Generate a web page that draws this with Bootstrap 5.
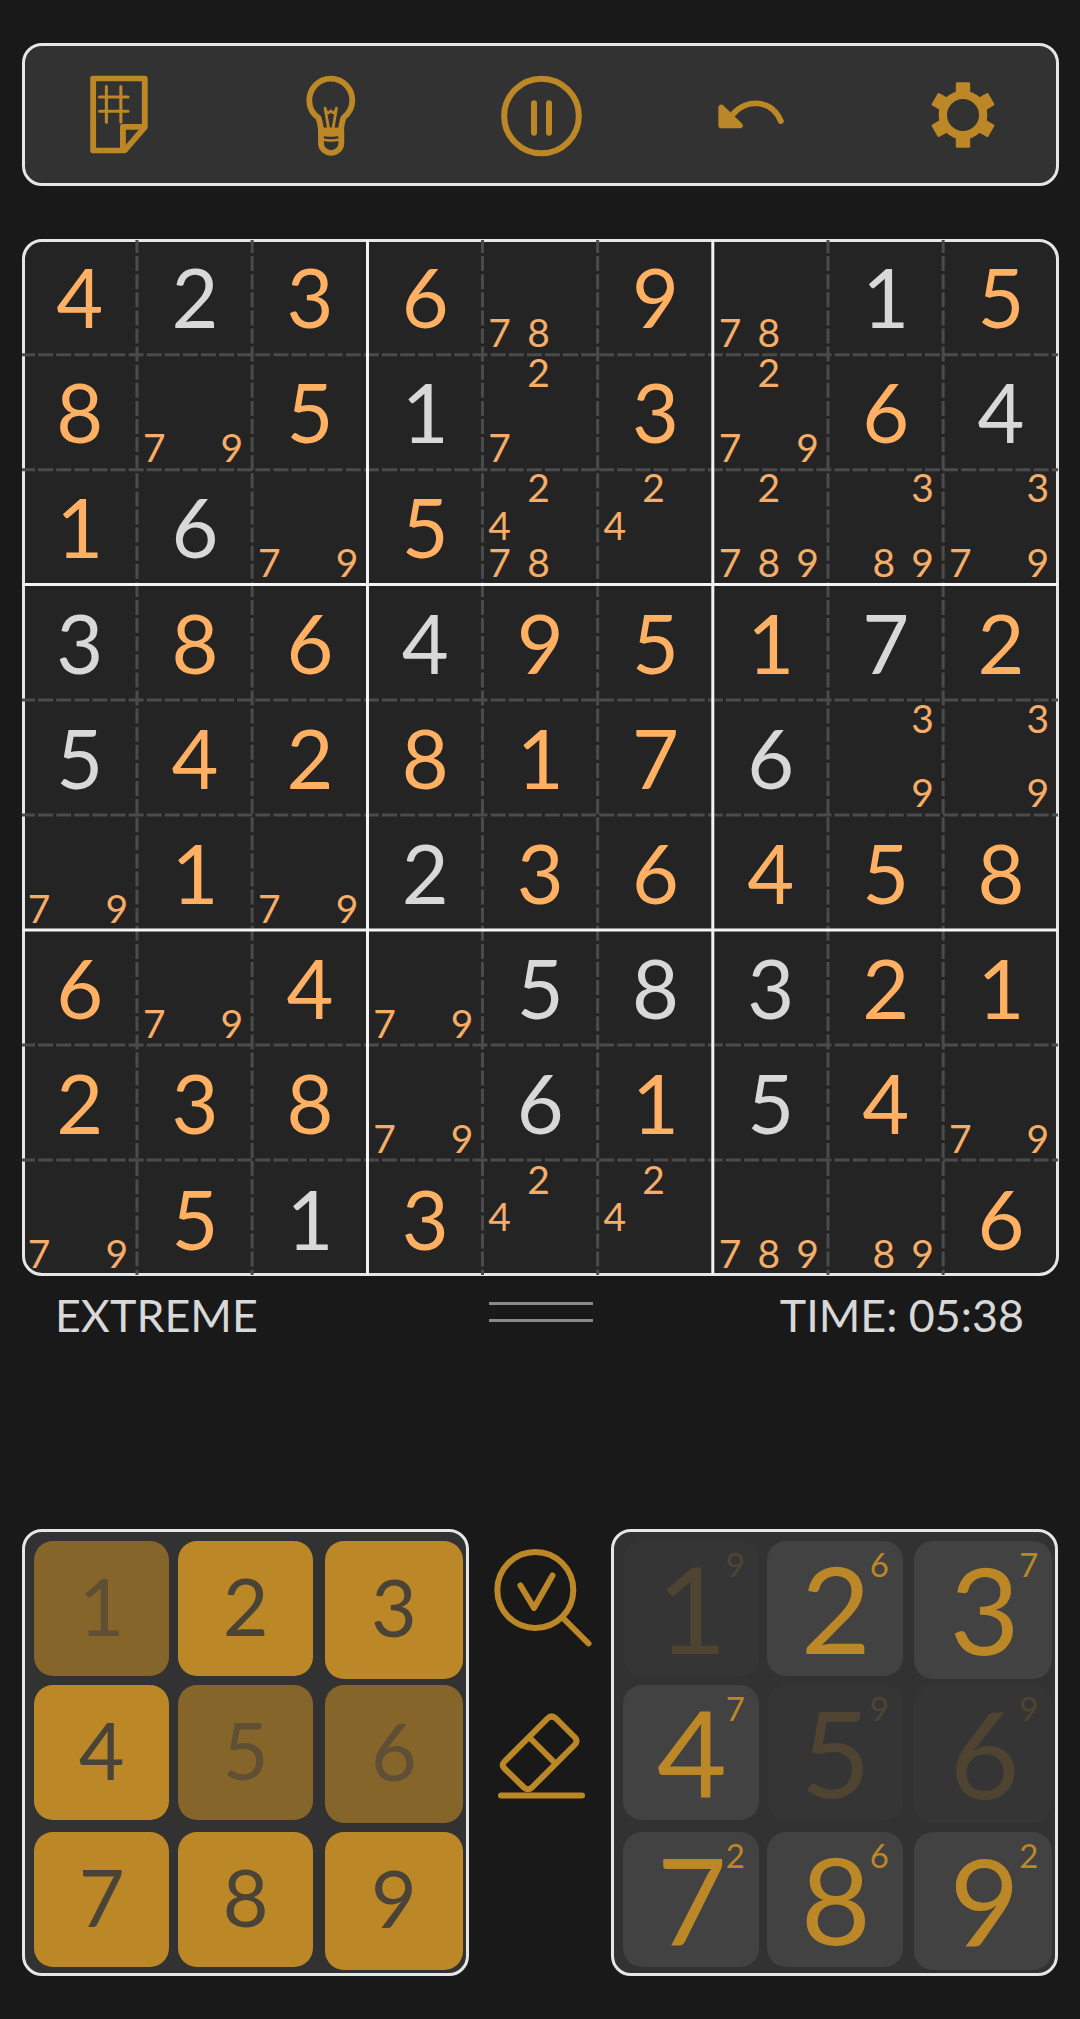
<!DOCTYPE html>
<html lang="en">
<head>
<meta charset="utf-8">
<meta name="viewport" content="width=device-width, initial-scale=1">
<title>Sudoku</title>
<link rel="stylesheet" href="https://cdn.jsdelivr.net/npm/bootstrap@5.3.0/dist/css/bootstrap.min.css">
<style>
  :root { --gold: #bc8726; --panel: #323232; --frame: #e6e6e6; }
  body { background: #191919; font-family: Lato, "Open Sans", sans-serif; height: 2019px; overflow: hidden; }
  .game { width: 1080px; padding: 43px 21px 0 22px; }
  .frame { border: 3px solid var(--frame); border-radius: 20px; background: var(--panel); }
  .toolbar { height: 143px; padding: 0 48px 0 49px; margin-bottom: 53px; }
  .tool { width: 90px; height: 90px; border: 0; padding: 0; background: none; }
  .tool svg { width: 90px; height: 90px; }
  svg { display: block; }
  .ico { fill: none; stroke: var(--gold); stroke-linecap: round; stroke-linejoin: round; }
  .ico .solid { fill: var(--gold); }

  .board { position: relative; height: 1037px; background: #242424; }
  .board-lines { position: absolute; left: -3px; top: -3px; width: 1037px; height: 1037px; pointer-events: none; }
  .cells { display: grid; grid-template-columns: repeat(9, 115.150px); grid-template-rows: repeat(9, 115.200px); margin: -1px 0 0 -2.800px; }
  .cell { font-size: 81px; line-height: 112px; text-align: center; color: #ffb063; }
  .cell.given { color: #d8d8d8; }
  .notes { display: grid; grid-template-columns: repeat(3, 38.800px); grid-template-rows: repeat(3, 37.300px); margin: -2px 0 0 -2.500px; font-size: 39px; line-height: 37.300px; color: #f5ad68; }

  .status { height: 253px; padding: 23px 35px 0 33px; color: #d8d8d8; font-size: 44.800px; line-height: 32px; }
  .status .side-text { flex: 1 1 0; }
  .grip { width: 104px; height: 20px; margin: 3px -1px 0 1px; border-top: 3px solid #888; border-bottom: 3px solid #888; }

  .pad { width: 447px; height: 447px; padding: 9px 0 0 8.500px; display: grid; grid-template-columns: 144px 147px 139px; grid-template-rows: 144px 147px 139px; }
  .key { position: relative; width: 135.500px; height: 135px; border: 0; border-radius: 19px; padding: 0 0 0 1px; background: var(--gold); color: #4a4337; font-size: 79px; text-align: center; display: flex; justify-content: center; line-height: 129px; }
  .key:nth-child(3n) { width: 138px; height: 138px; line-height: 132px; }
  .key.done { background: #856529; color: #5f4f34; }
  .pencil { padding-left: 9px; }
  .pencil .key { background: #424242; color: var(--gold); font-size: 121px; line-height: 133.500px; padding-left: 2px; }
  .pencil .key:nth-child(3n) { line-height: 136px; padding-left: 3px; }
  .pencil .key.done { background: #353535; color: #4f4432; }
  .key .left-count { position: absolute; right: 13.500px; top: 1px; font-size: 33px; line-height: 45px; }
  .side { width: 142px; padding-top: 20px; }
</style>
</head>
<body>
<main class="game">
  <nav class="frame toolbar d-flex align-items-center justify-content-between">
    <button class="tool" aria-label="New game">
      <svg class="ico" viewBox="214.9 118.5 261.4 270" preserveAspectRatio="none" stroke-width="17">
        <path d="M270.5 144H420.5V290L362 360H270.5Z"/><path d="M357 358V289H418"/>
        <path stroke-width="9" d="M309 168V275M351 168V275M289 199.500H372M289 242.500H372"/>
      </svg>
    </button>
    <button class="tool" aria-label="Hint">
      <svg class="ico" viewBox="827.5 118.5 261.4 270" preserveAspectRatio="none" stroke-width="17">
        <path d="M932 298C931 285 928 274 925 262C905 248 898 230 898 210A62.500 65.500 0 0 1 1023 210C1023 230 1014 248 997 262C994 274 991 285 990 298"/>
        <path d="M932 300V338A29.500 29.500 0 0 0 991 338V300Z"/>
        <path stroke-width="4" class="solid" d="M932 294H990V314Q961 320 932 314Z"/>
        <path stroke-width="7" d="M936 327Q961 333 986 327"/>
        <path stroke-width="8" d="M944 233L954 294M977 233L967 294M946 238Q948 248 954 247L961 241L967 247Q973 248 975 238"/>
      </svg>
    </button>
    <button class="tool" aria-label="Pause">
      <svg class="ico" viewBox="-135 -135 270 270" stroke-width="18">
        <circle cx="1.500" cy="3" r="112"/><path d="M-21 -35V53M24 -35V53"/>
      </svg>
    </button>
    <button class="tool" aria-label="Undo">
      <svg class="ico" viewBox="484.5 118.5 261.4 270" preserveAspectRatio="none" stroke-width="17">
        <path d="M560 251C598 205 672 205 699 272"/><path class="solid" d="M526 231V285H580Z"/>
      </svg>
    </button>
    <button class="tool" aria-label="Settings">
      <svg class="ico" viewBox="-135 -135 270 270">
        <circle r="60.500" stroke-width="25"/>
        <g id="teeth" class="solid" stroke="none"></g>
      </svg>
    </button>
  </nav>

  <section class="frame board">
    <svg class="board-lines" viewBox="22 239 1037 1037">
      <g id="thin" stroke="#4b4b4b" stroke-width="3" stroke-dasharray="15 3.1" stroke-dashoffset="2"></g>
      <path stroke="#f4f4f4" stroke-width="3" d="M367.500 240V1275M712.800 240V1275M23 584.500H1058M23 930H1058"/>
    </svg>
    <div class="cells" id="cells"></div>
  </section>

  <div class="status d-flex justify-content-between">
    <div class="side-text">EXTREME</div>
    <div class="grip flex-shrink-0"></div>
    <div class="side-text text-end">TIME: 05:38</div>
  </div>

  <section class="d-flex">
    <div class="frame pad" id="digits"></div>
    <div class="side">
      <svg class="ico" width="142" height="280" viewBox="469 1549 142 280" stroke-width="6">
        <circle cx="535.300" cy="1590" r="38"/><path d="M520.500 1585.500L534 1608L552.500 1575.500M563 1618L588.500 1643.500"/>
        <path d="M501 1795.500H582"/>
        <path d="M547.500 1718.500Q551.500 1714.500 556 1718.500L575 1737.500Q578 1741 575 1744.500L532 1787.500Q528 1791 524 1787.500L504.500 1768.500Q501 1765 504.500 1761.500ZM530 1738L555 1763"/>
      </svg>
    </div>
    <div class="frame pad pencil" id="pencil"></div>
  </section>
</main>

<script>
  // "g" marks a given digit, "n" a list of pencil marks
  const rows = [
    '4 g2 3 6 n78 9 n78 g1 5',
    '8 n79 5 g1 n27 3 n279 6 g4',
    '1 g6 n79 5 n2478 n24 n2789 n389 n379',
    'g3 8 6 g4 9 5 1 g7 2',
    'g5 4 2 8 1 7 g6 n39 n39',
    'n79 1 n79 g2 3 6 4 5 8',
    '6 n79 4 n79 g5 g8 g3 2 1',
    '2 3 8 n79 g6 1 g5 4 n79',
    'n79 5 g1 3 n24 n24 n789 n89 6'
  ];
  document.getElementById('cells').innerHTML = rows.join(' ').split(' ').map(c => {
    if (c[0] === 'n') {
      const marks = [...'123456789'].map(d => '<span>' + (c.includes(d) ? d : '') + '</span>').join('');
      return '<div class="cell"><div class="notes">' + marks + '</div></div>';
    }
    return c[0] === 'g' ? '<div class="cell given">' + c[1] + '</div>' : '<div class="cell">' + c + '</div>';
  }).join('');

  // Dashed separators between cells inside each box
  document.getElementById('thin').innerHTML = [1, 2, 4, 5, 7, 8].map(i => {
    const x = 21.8 + i * 115.17, y = 239.7 + i * 115.05;
    return `<path d="M${x} 240V1275M22 ${y}H1058"/>`;
  }).join('');

  document.getElementById('teeth').innerHTML = [0, 60, 120, 180, 240, 300].map(a =>
    `<rect x="-21.5" y="-98" width="43" height="36" rx="4" transform="rotate(${a})"/>`).join('');

  const counts = [9, 6, 7, 7, 9, 9, 2, 6, 2];
  const build = (id, withCount) => {
    document.getElementById(id).innerHTML = counts.map((c, i) =>
      `<button type="button" class="key${c === 9 ? ' done' : ''}">${i + 1}${withCount ? `<span class="left-count">${c}</span>` : ''}</button>`).join('');
  };
  build('digits', false);
  build('pencil', true);
</script>
<script src="https://cdn.jsdelivr.net/npm/bootstrap@5.3.0/dist/js/bootstrap.bundle.min.js"></script>
</body>
</html>
